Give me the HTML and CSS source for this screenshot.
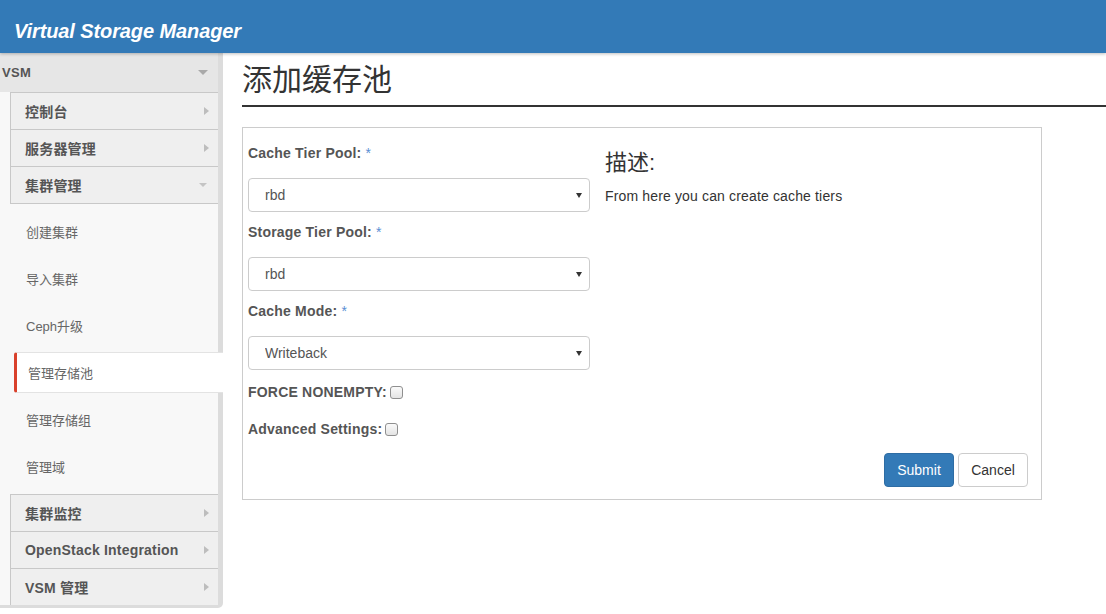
FILE: index.html
```html
<!DOCTYPE html>
<html lang="zh-CN">
<head>
<meta charset="utf-8">
<title>Virtual Storage Manager</title>
<link rel="stylesheet" href="styles.css">
</head>
<body>
<header class="topbar">
  <h1 class="brand">Virtual Storage Manager</h1>
</header>
<div class="layout">
  <nav class="sidebar">
    <div class="nav-root"><span>VSM</span><i class="caret-down"></i></div>
    <ul class="group">
      <li class="group-item"><span>控制台</span><i class="caret-right"></i></li>
      <li class="group-item"><span>服务器管理</span><i class="caret-right"></i></li>
      <li class="group-item"><span>集群管理</span><i class="caret-down light"></i></li>
    </ul>
    <ul class="subnav">
      <li class="sub-item">创建集群</li>
      <li class="sub-item">导入集群</li>
      <li class="sub-item">Ceph升级</li>
      <li class="sub-item active">管理存储池</li>
      <li class="sub-item">管理存储组</li>
      <li class="sub-item">管理域</li>
    </ul>
    <ul class="group group-last">
      <li class="group-item"><span>集群监控</span><i class="caret-right"></i></li>
      <li class="group-item"><span>OpenStack Integration</span><i class="caret-right"></i></li>
      <li class="group-item"><span>VSM 管理</span><i class="caret-right"></i></li>
    </ul>
  </nav>
  <main class="content">
    <h2 class="page-title">添加缓存池</h2>
    <form class="panel">
      <div class="cols">
        <div class="col-left">
          <div class="form-group">
            <label class="field-label">Cache Tier Pool: <span class="req">*</span></label>
            <div class="select-wrap">
              <select class="select"><option>rbd</option></select>
            </div>
          </div>
          <div class="form-group">
            <label class="field-label">Storage Tier Pool: <span class="req">*</span></label>
            <div class="select-wrap">
              <select class="select"><option>rbd</option></select>
            </div>
          </div>
          <div class="form-group">
            <label class="field-label">Cache Mode: <span class="req">*</span></label>
            <div class="select-wrap">
              <select class="select"><option>Writeback</option></select>
            </div>
          </div>
          <div class="check-row">
            <label class="check-label">FORCE NONEMPTY:<input type="checkbox" class="checkbox"></label>
          </div>
          <div class="check-row">
            <label class="check-label">Advanced Settings:<input type="checkbox" class="checkbox"></label>
          </div>
        </div>
        <div class="col-right">
          <h3 class="desc-title">描述:</h3>
          <p class="desc-text">From here you can create cache tiers</p>
        </div>
      </div>
      <div class="actions">
        <button type="button" class="btn btn-primary">Submit</button>
        <button type="button" class="btn btn-default">Cancel</button>
      </div>
    </form>
  </main>
</div>
</body>
</html>
```

FILE: styles.css
```css
* {
  box-sizing: border-box;
}

body {
  margin: 0;
  font-family: "Liberation Sans", Arial, "Noto Sans CJK SC", sans-serif;
  color: #333;
  background: #fff;
}

/* Header */
.topbar {
  height: 53px;
  background: #337ab7;
  padding: 9px 0 0 14px;
  box-shadow: 0 1px 3px rgba(0, 0, 0, 0.25);
  position: relative;
  z-index: 1;
}

.brand {
  margin: 0;
  font-size: 20px;
  line-height: 44px;
  font-weight: bold;
  font-style: italic;
  letter-spacing: -0.1px;
  color: #fff;
}

.layout {
  display: flex;
  align-items: flex-start;
}

/* Sidebar */
.sidebar {
  width: 223px;
  flex: none;
  background: #f8f8f8;
  border-right: 5px solid #dcdcdc;
  border-bottom: 3px solid #dcdcdc;
  border-bottom-right-radius: 5px;
}

.nav-root {
  height: 39px;
  background: #e6e6e6;
  display: flex;
  align-items: center;
  justify-content: space-between;
  padding: 0 10px 0 2px;
  font-weight: bold;
  font-size: 13px;
  letter-spacing: 0.3px;
  color: #555;
}

.group {
  list-style: none;
  margin: 0 0 0 10px;
  padding: 0;
  border: 1px solid #c8c8c8;
  border-right: 0;
  background: #efefef;
}

.group-last {
  border-bottom: 0;
}

.group-item {
  height: 37px;
  display: flex;
  align-items: center;
  justify-content: space-between;
  padding: 0 9px 0 14px;
  font-weight: bold;
  font-size: 14px;
  letter-spacing: 0.2px;
  color: #555;
  border-bottom: 1px solid #c8c8c8;
}

.group-item:last-child {
  height: 36px;
  border-bottom: 0;
}

.caret-right {
  width: 0;
  height: 0;
  border-left: 5px solid #bdbdbd;
  border-top: 4px solid transparent;
  border-bottom: 4px solid transparent;
}

.caret-down {
  width: 0;
  height: 0;
  border-top: 5px solid #a9a9a9;
  border-left: 5px solid transparent;
  border-right: 5px solid transparent;
}

.caret-down.light {
  border-top: 4px solid #c4c4c4;
  border-left: 4px solid transparent;
  border-right: 4px solid transparent;
  margin-right: 2px;
}

.subnav {
  list-style: none;
  margin: 0;
  padding: 4px 0;
}

.sub-item {
  height: 47px;
  display: flex;
  align-items: center;
  padding-left: 26px;
  font-size: 13px;
  color: #666;
}

.sub-item.active {
  height: 41px;
  margin: 3px -5px 3px 14px;
  background: #fff;
  border-top: 1px solid #e3e3e3;
  border-bottom: 1px solid #e3e3e3;
  border-left: 3px solid #d9412c;
  border-radius: 3px 0 0 3px;
  padding-left: 11px;
}

/* Main content */
.content {
  flex: 1;
  padding: 9px 0 0 19px;
}

.page-title {
  margin: 0;
  font-size: 30px;
  line-height: 36px;
  font-weight: normal;
  color: #333;
  padding-bottom: 7px;
  border-bottom: 2px solid #333;
}

.panel {
  width: 800px;
  margin: 20px 0 0;
  border: 1px solid #ccc;
  padding: 15px 13px 12px 5px;
}

.cols {
  display: flex;
  gap: 15px;
}

.col-left {
  width: 342px;
  flex: none;
}

.col-right {
  flex: 1;
}

.field-label {
  display: block;
  font-weight: bold;
  font-size: 14px;
  letter-spacing: 0.2px;
  line-height: 20px;
  margin-bottom: 15px;
  color: #555;
}

.req {
  color: #5b8fd3;
  font-weight: normal;
}

.select-wrap {
  position: relative;
  height: 34px;
  margin-bottom: 10px;
}

.select-wrap::after {
  content: "";
  position: absolute;
  right: 8px;
  top: 15px;
  width: 0;
  height: 0;
  border-top: 5px solid #333;
  border-left: 3px solid transparent;
  border-right: 3px solid transparent;
  pointer-events: none;
}

.select {
  display: block;
  width: 100%;
  height: 34px;
  margin: 0;
  border: 1px solid #ccc;
  border-radius: 4px;
  padding: 0 16px;
  font-family: inherit;
  font-size: 14px;
  color: #555;
  background: #fff;
  -webkit-appearance: none;
  appearance: none;
}

.check-row {
  display: flex;
  align-items: center;
  height: 20px;
  margin: 12px 0 0;
}

.check-row + .check-row {
  margin-top: 17px;
}

.check-row:last-child {
  margin-bottom: 14px;
}

.check-label {
  display: flex;
  align-items: center;
  font-weight: bold;
  font-size: 14px;
  line-height: 20px;
  letter-spacing: 0.2px;
  color: #555;
}

.checkbox {
  -webkit-appearance: none;
  appearance: none;
  width: 13px;
  height: 13px;
  margin: 0 0 0 3px;
  border: 1px solid #8f8f8f;
  border-radius: 3px;
  background: linear-gradient(#fafafa, #e4e4e4);
}

.desc-title {
  margin: 5px 0 0;
  font-size: 22px;
  line-height: 30px;
  font-weight: normal;
  color: #333;
}

.desc-text {
  margin: 8px 0 0;
  font-size: 14px;
  line-height: 20px;
  letter-spacing: 0.15px;
  color: #333;
}

.actions {
  display: flex;
  justify-content: flex-end;
  gap: 4px;
}

.btn {
  width: 70px;
  height: 34px;
  border-radius: 4px;
  font-family: inherit;
  font-size: 14px;
  padding: 0;
  margin: 0;
}

.btn-primary {
  background: #337ab7;
  border: 1px solid #2e6da4;
  color: #fff;
}

.btn-default {
  background: #fff;
  border: 1px solid #ccc;
  color: #333;
}
```
